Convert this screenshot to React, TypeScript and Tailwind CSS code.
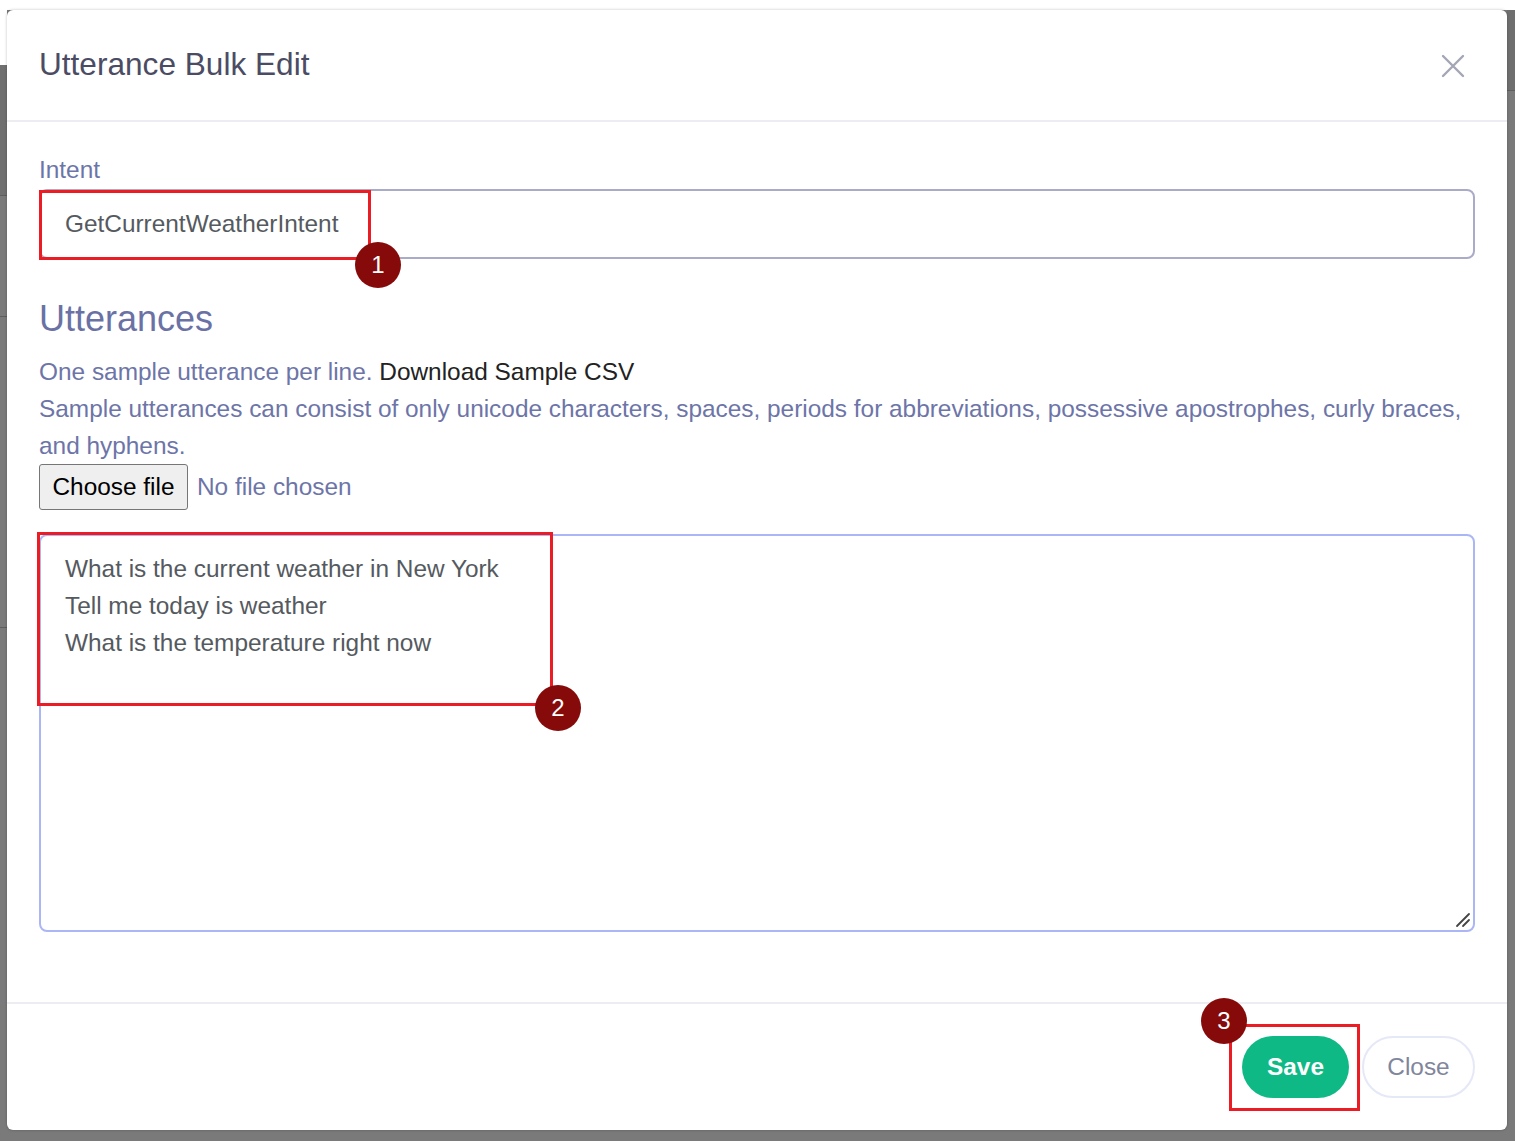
/**
 * Utterance bulk edit modal with tutorial annotations.
 */

// Numbered callout badge shown over the screenshot.
function Badge({ n, className }: { n: number; className: string }) {
  return (
    <span
      className={`absolute flex h-[46px] w-[46px] items-center justify-center rounded-full bg-[#870a0a] text-[24px] leading-none text-white ${className}`}
    >
      {n}
    </span>
  );
}

// Red rectangle drawn around the highlighted control.
function Highlight({ className }: { className: string }) {
  return <span className={`pointer-events-none absolute border-[3px] border-[#ec1c24] ${className}`} />;
}

export default function App() {
  const utterances = [
    'What is the current weather in New York',
    'Tell me today is weather',
    'What is the temperature right now',
  ].join('\n');

  return (
    <div className="flex h-[1141px] w-[1515px] flex-col overflow-hidden bg-[#7a7a7a] font-['Liberation_Sans',Arial,sans-serif]">
      <div className="h-[10px] shrink-0 bg-white" />
      <div className="flex flex-1">
        {/* page peeking out behind the overlay */}
        <div className="flex w-[7px] shrink-0 flex-col">
          <div className="h-[55px] bg-white" />
          <div className="h-[130px] bg-[#6f6f6f]" />
          <div className="h-px bg-[#5e5e5e]" />
          <div className="h-[120px]" />
          <div className="h-px bg-[#5e5e5e]" />
          <div className="h-[310px]" />
          <div className="h-px bg-[#5e5e5e]" />
        </div>

        <section className="relative flex h-[1120px] w-[1500px] shrink-0 flex-col rounded-[6px] bg-white shadow-[0_0_3px_rgba(0,0,0,0.25)]">
          <header className="flex h-[112px] shrink-0 items-center justify-between border-b-2 border-[#ececf3] px-[32px]">
            <h1 className="text-[31.6px] leading-none text-[#4b4c63]">Utterance Bulk Edit</h1>
            <svg width="24" height="24" viewBox="0 0 24 24" className="mr-[10px] mt-[2px] text-[#a3a6b4]">
              <path d="M2 2 L22 22 M22 2 L2 22" stroke="currentColor" strokeWidth="2.4" strokeLinecap="round" />
            </svg>
          </header>

          <div className="flex flex-1 flex-col px-[32px] pt-[33px]">
            <label className="mb-[4px] text-[24.4px] leading-[30px] text-[#6d75a8]">Intent</label>
            <input
              readOnly
              value="GetCurrentWeatherIntent"
              className="h-[70px] rounded-[8px] border-2 border-[#a9acc8] px-[24px] text-[24.4px] text-[#555a60] outline-none"
            />

            <h2 className="mt-[38px] text-[36px] leading-[44px] text-[#6a72a5]">Utterances</h2>
            <p className="mt-[12px] text-[24.4px] leading-[37px] text-[#6d75a8]">
              One sample utterance per line. <span className="text-[#222]">Download Sample CSV</span>
              <br />
              Sample utterances can consist of only unicode characters, spaces, periods for abbreviations, possessive
              apostrophes, curly braces, and hyphens.
            </p>
            <div className="flex items-center gap-[9px]">
              <button className="h-[46px] w-[149px] rounded-[3px] border border-[#767676] bg-[#efefef] text-[24.4px] text-black">
                Choose file
              </button>
              <span className="text-[24.4px] text-[#6d75a8]">No file chosen</span>
            </div>

            <div className="relative mt-[24px] flex">
              <textarea
                readOnly
                defaultValue={utterances}
                className="h-[398px] flex-1 resize-none rounded-[8px] border-2 border-[#aab6f6] px-[24px] pt-[14px] text-[24.4px] leading-[37px] text-[#555a60] outline-none"
              />
              <svg width="16" height="16" viewBox="0 0 16 16" className="absolute bottom-[4px] right-[4px] text-[#444]">
                <path d="M2 14 L14 2 M8 14 L14 8" stroke="currentColor" strokeWidth="1.8" strokeLinecap="round" />
              </svg>
            </div>
          </div>

          <footer className="flex h-[128px] shrink-0 items-center justify-end gap-[13px] border-t-2 border-[#ececf3] px-[32px]">
            <button className="h-[62px] w-[107px] rounded-full bg-[#0eb985] text-[24.4px] font-semibold text-white">
              Save
            </button>
            <button className="h-[62px] w-[113px] rounded-full border-2 border-[#e5e8f7] bg-white text-[24.4px] text-[#80869b]">
              Close
            </button>
          </footer>

          <Highlight className="left-[32px] top-[180px] h-[70px] w-[332px]" />
          <Badge n={1} className="left-[348px] top-[232px]" />
          <Highlight className="left-[30px] top-[522px] h-[174px] w-[516px]" />
          <Badge n={2} className="left-[528px] top-[675px]" />
          <Highlight className="left-[1222px] top-[1014px] h-[87px] w-[131px]" />
          <Badge n={3} className="left-[1194px] top-[988px]" />
        </section>

        <div className="flex w-[8px] shrink-0 flex-col">
          <div className="h-[80px] bg-[#6f6f6f]" />
          <div className="h-px bg-[#5e5e5e]" />
        </div>
      </div>
    </div>
  );
}
